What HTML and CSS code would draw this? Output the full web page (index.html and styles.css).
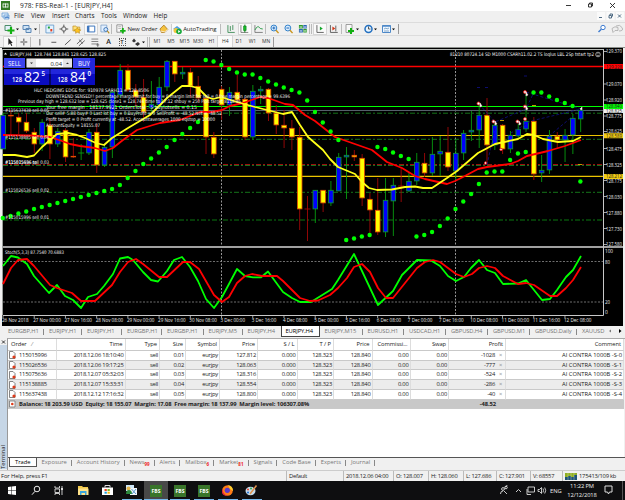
FILE: index.html
```html
<!DOCTYPE html>
<html lang="en">
<head>
  <meta charset="UTF-8">
  <title>978: FBS-Real-1 - [EURJPY,H4]</title>
  <link rel="stylesheet" href="styles.css">
</head>
<body>
  <header class="titlebar">
    <svg class="app-icon" width="9" height="9" viewBox="0 0 9 9"><path fill="#347a24" d="M0 0h9v9H0z"/><path stroke="#fff" fill="none" d="M2 2.5v4M4.5 2.5v4M7 2.5v4M2 3h5M2 6h5" stroke-width=".8"/></svg>
    <span class="title">978: FBS-Real-1 - [EURJPY,H4]</span>
    <svg class="win-buttons" width="52" height="10" viewBox="0 0 52 10"><path d="M1 5.5h5M23.5 4h3v3h-3zM24.5 4V3h3v3h-1M45 3l5 5M50 3l-5 5" fill="none" stroke="#222" stroke-width=".9"/></svg>
  </header>

  <nav class="menubar">
    <svg width="14" height="11" viewBox="0 0 14 11"><path d="M2 2h6v4H2zM4 4h5v4H4z" fill="#dcebfa" stroke="#6b9fd4" stroke-width=".8"/><path d="M5 7l2-1 2 1" stroke="#3b76c4" fill="none"/></svg>
    <span>File</span><span>View</span><span>Insert</span><span>Charts</span><span>Tools</span><span>Window</span><span>Help</span>
    <svg class="mdi-buttons" width="27" height="11" viewBox="0 0 27 11"><path d="M0 1h8v8H0zM9.500 1h8v8h-8zM19 1h8v8h-8z" fill="#fafafa"/><path d="M2 6.500h3M12 4.500h2.500v2.500H12zM13 4V3h2.500v2.500M21 3.500l3 3M24 3.500l-3 3" fill="none" stroke="#3f5d78" stroke-width=".9"/></svg>
  </nav>

  <div class="toolbar">
    <svg class="w18" viewBox="0 0 18 12"><path d="M2 2.500h6v5H2z" fill="#e4f0fb" stroke="#4b8c68"/><path d="M8 4v7M4.500 7.500h7" stroke="#12b012" stroke-width="2.200"/><path d="M13 5.500h3l-1.500 1.700z"/></svg>
    <svg class="w18" viewBox="0 0 18 12"><path d="M2 2.500h6v4H2zM5 5.500h5v4H5z" fill="#cfe3f5" stroke="#5b87b5"/><path d="M13 5.500h3l-1.500 1.700z"/></svg>
    <b class="sep"></b>
    <svg class="w14" viewBox="0 0 14 12"><path d="M3 2h8v8H3z" fill="#e3f2ff" stroke="#5b93c7" stroke-width=".8"/><path d="M5 3.500h2v2H5z" fill="#1aa030"/><path d="M7.500 6h2v2.500h-2z" fill="#e04020"/></svg>
    <svg class="w14" viewBox="0 0 14 12"><circle cx="7" cy="6" r="2.300" fill="none" stroke="#666"/><path d="M7 1.500v3M7 7.500v3M2.500 6h3M8.500 6h3" stroke="#555"/></svg>
    <svg class="w14" viewBox="0 0 14 12"><path d="M3 3h3l1 1h3v4H3z" fill="#ffe17a" stroke="#bd8c20" stroke-width=".7"/><path d="M7.500 4.500l1.200 2 2.300.4-1.500 1.500.3 2-2.200-1-2 1 .3-2L4 7l2.300-.5z" fill="#ffc21f" stroke="#a97a10" stroke-width=".5"/></svg>
    <svg class="w14 pressed" viewBox="0 0 14 12"><path d="M3.500 3h7.500v6H3.500z" fill="#fff" stroke="#3a74bd"/><path d="M3.500 3h2v6h-2z" fill="#3a74bd"/></svg>
    <svg class="w14" viewBox="0 0 14 12"><path d="M3 2h6v7H3z" fill="#e3f0ff" stroke="#7da0c8" stroke-width=".8"/><circle cx="8" cy="6.500" r="2" fill="#d5e9ff" stroke="#4177b5"/><path d="M9.500 8l2 2.500" stroke="#b88c20" stroke-width="1.200"/></svg>
    <b class="sep"></b>
    <svg class="w13" viewBox="0 0 13 12"><path d="M2 1.500h6v8H2z" fill="#fafafa" stroke="#777" stroke-width=".8"/><path d="M3.500 3.500h3M3.500 5.500h3" stroke="#999" stroke-width=".7"/><path d="M8.500 5v6M5.500 8h6" stroke="#12b012" stroke-width="2"/></svg>
    <span class="label order-label">New Order</span>
    <svg class="w14" viewBox="0 0 14 12"><path d="M3 6l4-4 4 4.500L8 9.500H4.500z" fill="#f5c23f" stroke="#a87418" stroke-width=".8"/><path d="M3.500 8l4.500 1 3-2.500" stroke="#fff" fill="none" stroke-width=".7"/></svg>
    <span class="auto">
      <svg width="11" height="11" viewBox="0 0 11 11"><path d="M1 5l4-3 4 3-4 1.500z" fill="#4d9ee0"/><circle cx="4" cy="6.500" r="2.500" fill="#f0c63d"/><circle cx="7" cy="7.500" r="2.800" fill="#17a83b"/><path d="M6.200 6l2.200 1.500-2.200 1.500z" fill="#fff"/></svg>
      <span class="label">AutoTrading</span>
    </span>
    <b class="sep"></b>
    <svg class="w14" viewBox="0 0 14 12"><path d="M4 2v7.500h7M6.500 3v5M9 2v5" fill="none" stroke="#3b8c55" stroke-width=".9"/></svg>
    <svg class="w14 pressed" viewBox="0 0 14 12"><path d="M3 2v7.500h7.500" fill="none" stroke="#666" stroke-width=".8"/><path d="M7 1.500v8" stroke="#057b15"/><path d="M5.700 3h2.600v4.500H5.700z" fill="#19be2a" stroke="#057b15" stroke-width=".6"/></svg>
    <svg class="w14" viewBox="0 0 14 12"><path d="M3 2v7.500h8" fill="none" stroke="#666" stroke-width=".8"/><path d="M3 7q3-5 4-3t4 2" fill="none" stroke="#2d9d4b"/></svg>
    <b class="sep narrow"></b>
    <svg class="w14" viewBox="0 0 14 12"><circle cx="6" cy="5" r="3" fill="#d9edff" stroke="#2f7fc9"/><path d="M4.500 5h3M6 3.500v3" stroke="#2066b5"/><path d="M8.200 7.200l2.600 3" stroke="#c9961f" stroke-width="1.500"/></svg>
    <svg class="w14" viewBox="0 0 14 12"><circle cx="6" cy="5" r="3" fill="#d9edff" stroke="#2f7fc9"/><path d="M4.500 5h3" stroke="#2066b5"/><path d="M8.200 7.200l2.600 3" stroke="#c9961f" stroke-width="1.500"/></svg>
    <svg class="w14" viewBox="0 0 14 12"><path d="M3 2h4v3.500H3zM7.500 6H11v3.500H7.500z" fill="#2d9b2d"/><path d="M7.500 2H11v3.500H7.500zM3 6h4v3.500H3z" fill="#2864b4"/><path d="M3.700 4h2.500M8 4h2.500M3.700 8h2.500M8 8h2.500" stroke="#fff" stroke-width=".9"/></svg>
    <b class="sep narrow double"></b>
    <svg class="w14 pressed" viewBox="0 0 14 12"><path d="M4 2v7.500h7" fill="none" stroke="#555" stroke-width=".9"/><path d="M7 3.500l3 2-3 2z" fill="#14a72c"/></svg>
    <svg class="w14" viewBox="0 0 14 12"><path d="M3.500 2v7.500h7.500M9 2.500v6" fill="none" stroke="#555" stroke-width=".9"/><path d="M5.500 3.500l3 2-3 2z" fill="#d43818"/></svg>
    <b class="sep narrow"></b>
    <svg class="w18" viewBox="0 0 18 12"><path d="M2 1.500h6v8H2z" fill="#f8f8f8" stroke="#888" stroke-width=".8"/><path d="M7 5v6M4 8h6" stroke="#12b012" stroke-width="2"/><path d="M12 5.500h3l-1.500 1.700z"/></svg>
    <svg class="w18" viewBox="0 0 18 12"><circle cx="6.500" cy="6" r="3.500" fill="#e9f5ff" stroke="#2370c0" stroke-width="1.500"/><path d="M6.500 3.500V6h2" fill="none" stroke="#333" stroke-width=".8"/><path d="M12 5.500h3l-1.500 1.700z"/></svg>
    <svg class="w18" viewBox="0 0 18 12"><path d="M2.500 2.500h8v7h-8z" fill="#eef6ff" stroke="#4e89c8"/><path d="M2.500 3h8" stroke="#4e89c8" stroke-width="1.500"/><path d="M4 6l2-1 1 1 2-1M4 8h5" stroke="#3d77a8" fill="none" stroke-width=".6"/><path d="M12 5.500h3l-1.500 1.700z"/></svg>
    <b class="sep end"></b>
    <svg class="search" width="28" height="12" viewBox="0 0 28 12"><circle cx="6" cy="4.500" r="2.200" fill="#fff" stroke="#3d7bd0"/><path d="M4.300 6.300L1.500 9" stroke="#3d7bd0" stroke-width="1.400"/><path d="M15 5.500q3-3 6-1v3h-3l-2 2zM19 3q4-2 6 1.500T22 8" fill="#eee" stroke="#aaa" stroke-width=".8"/></svg>
  </div>

  <div class="toolbar tools">
    <svg class="w14 pressed" viewBox="0 0 14 12"><path d="M5.500 2v7l1.700-1.600L8.500 10l1-.5-1.200-2.500H10z" fill="#222"/></svg>
    <svg class="w14" viewBox="0 0 14 12"><path d="M7 2.500v3M7 6.500v3M3.500 6h3M7.500 6h3" stroke="#333" stroke-width=".9"/></svg>
    <b class="sep narrow"></b>
    <svg class="w14" viewBox="0 0 14 12"><path d="M7 3v6.500" stroke="#444" stroke-width=".9"/></svg>
    <svg class="w14" viewBox="0 0 14 12"><path d="M4.500 6.300h5" stroke="#444" stroke-width=".9"/></svg>
    <svg class="w14" viewBox="0 0 14 12"><path d="M4 9l6-5.500" stroke="#444" stroke-width=".9"/></svg>
    <svg class="w14" viewBox="0 0 14 12"><path d="M3 8l6-5.500M5 10l6-5.500M5 3.500l4 4" stroke="#444" stroke-width=".8"/></svg>
    <svg class="w14" viewBox="0 0 14 12"><path d="M3.500 3h7M3.500 5.500h7M3.500 8h6" stroke="#666" stroke-width=".8"/><path d="M10 7v4M8.500 9h3" stroke="#444" stroke-width=".7"/></svg>
    <span class="glyph">A</span>
    <span class="glyph boxed">T</span>
    <svg class="w18" viewBox="0 0 18 12"><path d="M3 5l2-2.500L7 5 5 6.500zM6 8l3-2 2 2-2.500 2z" fill="#333"/><path d="M13 5.500h3l-1.500 1.700z"/></svg>
    <b class="sep double"></b>
    <span class="tf">M1</span><span class="tf">M5</span><span class="tf">M15</span><span class="tf">M30</span><span class="tf">H1</span><span class="tf on">H4</span><span class="tf">D1</span><span class="tf">W1</span><span class="tf">MN</span>
    <b class="sep end"></b>
  </div>

  <main class="chart-window">
    <svg class="chart" width="625" height="279" viewBox="0 47 625 279">
      <path fill="#000" d="M2 48h621v278H2z"/>
      <path d="M0 47.500h625" stroke="#8b8f8b"/>
      <path d="M2.500 49.500h601" stroke="#b9bdb9"/>
      <path d="M2.500 49v266" stroke="#9a9d9a"/>
      <!-- day separators and horizontal levels -->
      <path class="separator" d="M221.500 50v265M455.500 50v265"/>
      <path d="M3 113.200h600M3 139.300h600M3 192.300h600" stroke="#16801c" stroke-width=".9" stroke-dasharray="5 2 2 2"/>
      <path d="M3 220h600" stroke="#07500b" stroke-width="1.400" stroke-dasharray="5 2 2 2"/>
      <path d="M3 164.500h600" stroke="#b01010" stroke-dasharray="5 2 2 2" stroke-width=".9"/>
      <path d="M3 165.500h600" stroke="#188020" stroke-dasharray="5 2 2 2" stroke-width=".9"/>
      <path d="M3 110.500h600" stroke="#55606a"/>
      <path d="M3 66.500h600" stroke="#f00" stroke-width="1.400"/>
      <path d="M3 106.500h600" stroke="#0f0" stroke-width="1.200"/>
      <path d="M3 135.500h600M3 176.400h600" stroke="#ecc400" stroke-width="1.200"/>
      <g id="candles"></g>
      <path d="M526 92l55 17-50 12-20 12M479 104l16 18 31-13 8-17M487 165l8-37M549 136l24-20M477 87.500h4M485 87.500h4M524 76h4" fill="none" stroke="#10108c" stroke-width=".8" stroke-dasharray="3 2"/>
      <polyline class="ma slow" points="3,135 30,135.500 50,137 62,141 70,144 80,146 95,148 105,151 113,148 123,140 137,130 153,125 160,123 180,120 200,112 212,112 222,110 230,106 243,103 260,97 268,98 285,104 293,105 305,115 315,121 325,129 335,137 352,143 372,150 387,162 402,168 415,176 425,179 447,184 455,181 463,177 478,169 487,167 510,164 518,161 527,156 548,151 565,146 581,140"/>
      <polyline class="ma fast" points="3,155 15,155 27,157 34,155.500 42,147 57,134 68,133 77,135 85,138 96,143 104,145 112,138 120,133 128,128 150,115 167,98 182,86 190,86 198,88 207,97 213,99 221,97 237,102 255,107 283,114 292,112 300,125 308,137 323,150 330,159 338,167 355,174 362,182 369,188 377,190 392,189.500 405,187 415,186.500 423,188 432,188 447,178 457,171 478,153 495,144 518,139 527,134 534,135 543,139 558,142 573,141 581,137"/>
      <g id="sar"></g>
      <g fill="#fff" stroke="#e01818" stroke-width=".9">
        <circle cx="478.500" cy="103.500" r="1.500"/><circle cx="493.500" cy="121.500" r="1.500"/><circle cx="517.500" cy="121.500" r="1.500"/><circle cx="525" cy="92" r="1.500"/><circle cx="525" cy="106.500" r="1.500"/><circle cx="525" cy="119" r="1.500"/><circle cx="485.500" cy="163" r="1.200"/><circle cx="501" cy="149.500" r="1.200"/>
      </g>
      <path d="M480 103l2 3-2 1zM495 121l2 3-2 1zM519 121l2 3-2 1zM526 92l2 3-2 1zM526 106l2 3-2 1zM580 109l2-2v3z" fill="#fff" stroke="#ecc" stroke-width=".6"/>
      <path d="M532 105.500h4M500 120.500h4M578 164.500h4" stroke="#d0b000" stroke-width=".9"/>

      <!-- comment block of the expert -->
      <g class="chart-text">
        <path d="M4 54.500h3l-1.500-2z" fill="#fff"/>
        <text x="10" y="55.500" textLength="96">EURJPY,H4&#160; 128.744 128.841 128.625 128.825</text>
        <text x="450" y="56" textLength="144">81210 80724.14 SD M1000 CSARh11.02.2 TS loqlus LBL 2Sp tstart tp2</text>
        <circle cx="598" cy="54.500" r="2.300" fill="none" stroke="#ddd" stroke-width=".7"/><path d="M596.800 55q1.200 1.400 2.400 0M597 53.600h.6M598.500 53.600h.6" fill="none" stroke="#ddd" stroke-width=".6"/>
        <text x="34" y="91.500" textLength="115">HLC HEDGING EDGE for: 910978 SARH11 = 128.8506</text>
        <text x="46" y="97.500" textLength="244">DOWNTREND SENSED!! percentage margin limit for buy = 0 margin limit for sell = 0 free margin percentage = 99.6396</text>
        <text x="18" y="103" textLength="223">Previous day high = 128.632 low = 128.625 close1 = 128.744 time to 17:12 shbuy = 250 Pips target 8118.96</text>
        <text x="46" y="109.200" textLength="151">Your free margin : 18137.9921 OrdersTotal : 5 buylotsells = 0.15</text>
        <text x="46" y="115" textLength="176">Our sell# 5.88 buy# 0 Last lot buy = 0.BuyProfit = 0 SellProfit = -48.52 Net = -48.52</text>
        <text x="46" y="120.700" textLength="169">Profit target = 0 Profit currently at -48.52. Accountaverages 1000 eqstop = 10000</text>
        <text x="46" y="126.500" textLength="54">AccountEquity = 18155.07</text>
        <text x="5" y="112.300" textLength="44">#115637438 sell 0.05</text>
        <text x="5" y="138.500" textLength="44">#115138885 sell 0.04</text>
        <text x="5" y="164" textLength="44">#115075636 sell 0.03</text>
        <text x="5" y="164" textLength="32">#115015996 tp</text>
        <text x="5" y="191.800" textLength="44">#115026536 sell 0.02</text>
        <text x="5" y="219" textLength="44">#115015996 sell 0.01</text>
      </g>

      <!-- one click trading panel -->
      <path d="M4 58h91v28H4z" fill="#000"/>
      <path d="M4 58h21v10H4zM73 58h17v10H73z" fill="#3a42ed"/>
      <path d="M4 69h45.500v16H4zM50.500 69H95v16H50.500z" fill="#0a0cc0"/>
      <path d="M4 69h45.500v5H4zM50.500 69H95v5H50.500zM90 58h5v11h-5z" fill="#2226db"/>
      <path d="M26.500 58.500H72v9H26.500z" fill="#fff"/><path d="M27 59h9v8h-9zM63 59h9v8h-9z" fill="#e4e4e4"/>
      <path d="M30 62.500h3l-1.500 1.600zM66 64h3l-1.500-1.600z" fill="#333"/>
      <g class="trade-text">
        <text x="8" y="65.800" textLength="13" class="side">SELL</text>
        <text x="78" y="65.800" textLength="12" class="side">BUY</text>
        <text x="50.500" y="65.500" textLength="11.500" class="lots">0.04</text>
        <text x="12" y="82" textLength="10" class="small">128</text><text x="24" y="82" textLength="16" class="big">82</text><text x="41.500" y="75.500" class="small">5</text>
        <text x="57.500" y="82" textLength="10" class="small">128</text><text x="70" y="82" textLength="16" class="big">84</text><text x="87.500" y="75.500" class="small">0</text>
      </g>

      <!-- stochastic -->
      <path d="M3 247h620" stroke="#a0a0a0" stroke-width="2"/>
      <path class="level" d="M3 261.500h600M3 302h600"/>
      <text class="chart-text" x="5" y="253.500" textLength="59">Stoch(5,3,3) 87.7540 70.6883</text>
      <polyline class="stoch main" points="3,266 11,256 18,257.500 27,264 34,276 49,293 57,285 65,296 73,300 81,308 88,297 97,294 104,286 113,274 120,258.500 128,257 133,260 143,272 151,280 158,281.500 167,271 174,260 182,257 190,267 198,281 206,299 214,308 222,297 229,284 237,269 245,276 253,277.300 261,277.300 268,271.500 283,292 292,298 300,302 311,302 332,289 338,280 354,254 378,305 393,291 402,275 417,260 431,260.500 440,266 448,276 456,281 464,277 471,268 479,260 487,270 495,273 503,284 518,283.500 526,280 542,300 550,299 557,290 566,277 573,270 581,256"/>
      <polyline class="stoch signal" points="3,284 11,268 18,260 27,259 34,266 50,285 57,288 72,293 81,301 95,301 112,285 120,272 128,262 136,259 143,264 159,277 167,277 183,262 190,262 199,269 214,295 222,302 229,297 237,283 245,276 252,274 262,276 277,276 283,281 300,298 310,301 318,300.500 330,295 338,288 347,278 354,267 362,264 370,272 378,288 386,298 393,298 417,268 425,262 433,260 440,262 456,274 464,277 472,274 479,268 487,266 495,268 503,276 518,284 526,283 534,285 550,296 557,296 566,288 573,280 581,267"/>

      <!-- scales -->
      <path d="M603.500 49v266.500H3" fill="none" stroke="#c8c8c8"/>
      <path d="M604 51.500h3M604 84h3M604 100h3M604 116h3M604 131.500h3M604 148.500h3M604 164.500h3M604 180.500h3M604 196.500h3M604 212.500h3M604 228.500h3M604 244.500h3" stroke="#ccc" stroke-width=".8"/>
      <g class="axis-text" id="prices"></g>
      <path d="M604 64h19v5h-19z" fill="#f00"/><path d="M604 108h19v5h-19z" fill="#eee"/><path d="M604 104h19v5h-19z" fill="#0f0"/><path d="M604 133.300h19v5h-19zM604 174h19v5h-19z" fill="#f2cb12"/>
      <g class="axis-text dark">
        <text x="606" y="68.500" textLength="16">129.228</text><text x="606" y="112.900" textLength="16">128.825</text><text x="606" y="108.300" textLength="16">128.840</text><text x="606" y="137.700" textLength="16">128.589</text><text x="606" y="178.300" textLength="16">128.212</text>
      </g>
      <g class="axis-text">
        <text x="605" y="253.300" textLength="8">100</text><text x="605" y="263.500" textLength="5">80</text><text x="605" y="304" textLength="5">20</text><text x="605" y="314.300">0</text>
      </g>
      <g class="axis-text" id="dates"></g>
    </svg>
  </main>

  <div class="chart-tabs">
    <span>EURGBP,H1</span><span>EURJPY,H1</span><span>EURJPY,H1</span><span>EURGBP,H1</span><span>EURGBP,H1</span><span>EURJPY,M5</span><span class="no-line">EURJPY,H4</span><span class="on">EURJPY,H4</span><span>EURJPY,M15</span><span>EURUSD,H1</span><span>USDCAD,H1</span><span>GBPUSD,H4</span><span>GBPUSD,M1</span><span>GBPUSD,Daily</span><span class="no-line">XAUUSD</span>
    <svg width="16" height="10" viewBox="0 0 16 10"><path d="M4 3.500v3L2 5z" fill="#777"/><path d="M12 3v4l2.500-2z"/></svg>
  </div>

  <section class="terminal">
    <aside class="side-strip">
      <svg width="7" height="6" viewBox="0 0 7 6"><path d="M2 1.500l3 3M5 1.500l-3 3" stroke="#222" stroke-width=".9"/></svg>
      <div class="strip-label"><span>Terminal</span></div>
    </aside>
    <div class="panel">
      <table class="orders">
        <colgroup><col class="c-order"><col class="c-time"><col class="c-type"><col class="c-size"><col class="c-symbol"><col class="c-price"><col class="c-sl"><col class="c-tp"><col class="c-cur"><col class="c-comm"><col class="c-swap"><col class="c-profit"><col class="c-comment"></colgroup>
        <tr class="head"><th class="first">Order &#160; <i>/</i></th><th>Time</th><th>Type</th><th>Size</th><th>Symbol</th><th>Price</th><th>S / L</th><th>T / P</th><th>Price</th><th>Commissi...</th><th>Swap</th><th>Profit</th><th>Comment</th></tr>
        <tr><td class="first"><svg class="doc" viewBox="0 0 7 8"><path d="M.500.500H4l2 2v5H.500z" fill="#fff" stroke="#666" stroke-width=".8"/><circle cx="5" cy="6" r="1.600" fill="#e03a18"/></svg>115015996</td><td>2018.12.06 18:10:40</td><td>sell</td><td>0.01</td><td>eurjpy</td><td>127.812</td><td>0.000</td><td>128.323</td><td>128.840</td><td>0.00</td><td>0.00</td><td class="profit">-1028<i>×</i></td><td class="comment">AI CONTRA 1000B -S-0</td></tr>
        <tr class="alt"><td class="first"><svg class="doc" viewBox="0 0 7 8"><path d="M.500.500H4l2 2v5H.500z" fill="#fff" stroke="#666" stroke-width=".8"/><circle cx="5" cy="6" r="1.600" fill="#e03a18"/></svg>115026536</td><td>2018.12.06 19:17:25</td><td>sell</td><td>0.02</td><td>eurjpy</td><td>128.063</td><td>0.000</td><td>128.323</td><td>128.840</td><td>0.00</td><td>0.00</td><td class="profit">-777<i>×</i></td><td class="comment">AI CONTRA 1000B -S-1</td></tr>
        <tr><td class="first"><svg class="doc" viewBox="0 0 7 8"><path d="M.500.500H4l2 2v5H.500z" fill="#fff" stroke="#666" stroke-width=".8"/><circle cx="5" cy="6" r="1.600" fill="#e03a18"/></svg>115075636</td><td>2018.12.07 05:32:03</td><td>sell</td><td>0.03</td><td>eurjpy</td><td>128.316</td><td>0.000</td><td>128.323</td><td>128.840</td><td>0.00</td><td>0.00</td><td class="profit">-524<i>×</i></td><td class="comment">AI CONTRA 1000B -S-2</td></tr>
        <tr class="alt"><td class="first"><svg class="doc" viewBox="0 0 7 8"><path d="M.500.500H4l2 2v5H.500z" fill="#fff" stroke="#666" stroke-width=".8"/><circle cx="5" cy="6" r="1.600" fill="#e03a18"/></svg>115138885</td><td>2018.12.07 15:33:31</td><td>sell</td><td>0.04</td><td>eurjpy</td><td>128.554</td><td>0.000</td><td>128.323</td><td>128.840</td><td>0.00</td><td>0.00</td><td class="profit">-286<i>×</i></td><td class="comment">AI CONTRA 1000B -S-3</td></tr>
        <tr><td class="first"><svg class="doc" viewBox="0 0 7 8"><path d="M.500.500H4l2 2v5H.500z" fill="#fff" stroke="#666" stroke-width=".8"/><circle cx="5" cy="6" r="1.600" fill="#e03a18"/></svg>115637438</td><td>2018.12.12 17:16:32</td><td>sell</td><td>0.05</td><td>eurjpy</td><td>128.800</td><td>0.000</td><td>128.323</td><td>128.840</td><td>0.00</td><td>0.00</td><td class="profit">-40<i>×</i></td><td class="comment">AI CONTRA 1000B -S-4</td></tr>
        <tr class="balance"><td colspan="11" class="first"><svg class="doc" viewBox="0 0 7 8"><path d="M.500 1h5.500v6H.500z" fill="#fff" stroke="#777" stroke-width=".8"/><circle cx="3.300" cy="4" r="1.300" fill="#e03a18"/></svg>Balance: 18 203.59 USD&#160; Equity: 18 155.07&#160; Margin: 17.08&#160; Free margin: 18 137.99&#160; Margin level: 106307.08%</td><td class="profit">-48.52</td><td></td></tr>
      </table>
      <div class="bottom-tabs">
        <span class="on">Trade</span><span>Exposure</span><span>Account History</span><span>News<sub>99</sub></span><span>Alerts</span><span>Mailbox<sub>6</sub></span><span>Market<sub>81</sub></span><span>Signals</span><span>Code Base</span><span>Experts</span><span>Journal</span>
      </div>
    </div>
  </section>

  <footer class="status">
    <span class="help">For Help, press F1</span><span>Default</span><span>2018.12.06 04:00</span><span>O: 128.007</span><span>H: 128.060</span><span>L: 127.686</span><span>C: 127.901</span><span>V: 68557</span>
    <span class="net"><svg width="12" height="7" viewBox="0 0 12 7"><path fill="#8fae24" d="M0 0h12v4H0z"/><path fill="#1d5278" d="M0 4h3v3H0zM3 3h3v4H3zM6 4h3v3H6zM9 2h3v5H9z"/><path stroke="#dfe7c0" stroke-width=".4" d="M3 0v7M6 0v7M9 0v7"/></svg>175413/109 kb</span>
  </footer>

  <div class="taskbar">
    <span class="app"><svg viewBox="0 0 24 19"><path d="M8 6l3.300-.500v3.700H8zM11.800 5.400L16 5v4.200h-4.200zM8 9.700h3.300v3.700L8 13zM11.800 9.700H16V14l-4.200-.500z" fill="#fff"/></svg></span>
    <span class="app"><svg viewBox="0 0 24 19"><circle cx="13" cy="8" r="2.800" fill="none" stroke="#eee"/><path d="M11 10.300L8 13.700" stroke="#eee"/></svg></span>
    <span class="app"><svg viewBox="0 0 24 19"><path d="M7 5v2h4.500V5M7 8h4.500v3.500H7zM7 14v-1.500h4.500V14M14 5v9" fill="none" stroke="#ddd" stroke-width=".9"/><path d="M13 7h2v2h-2z" fill="#ddd"/></svg></span>
    <span class="app"><svg viewBox="0 0 24 19"><path d="M6 5h4l1 1h5v8H6z" fill="#f2c94c"/><path d="M6 7.500h10.500V14H6z" fill="#ffe28a"/><path d="M8 10h6.500v4H13v-2h-3.500v2H8z" fill="#3ba4dc"/></svg></span>
    <span class="app"><svg viewBox="0 0 24 19"><path d="M6 6.500h11V14H6z" fill="#fff"/><path d="M9 6.500V4.500h5v2" fill="none" stroke="#ddd"/><path d="M8.500 8h2.300v2H8.500z" fill="#e9421e"/><path d="M11.500 8h2.300v2h-2.300z" fill="#78b928"/><path d="M8.500 10.700h2.300v2H8.500z" fill="#19a0dc"/><path d="M11.500 10.700h2.300v2h-2.300z" fill="#f5b80f"/></svg></span>
    <span class="app open"><svg viewBox="0 0 24 19"><path d="M6 4h8v6H6z" fill="#cfe8fa"/><path d="M10 7h7v7h-7z" fill="#f2f7fa"/><circle cx="8.500" cy="7.500" r="2" fill="#e2b44a"/><path d="M6 13q0-4 3-4t3 4z" fill="#2b8a3d"/><path d="M11.500 8l4.500 5M12 13l4-5" stroke="#5799d2"/></svg></span>
    <span class="app open active"><b class="fbs">FBS</b></span>
    <span class="app open"><b class="fbs">FBS</b></span>
    <span class="app open"><b class="fbs">FBS</b></span>
    <span class="app open"><svg viewBox="0 0 24 19"><circle cx="11.500" cy="9.500" r="5.300" fill="#ff7b16"/><path d="M12 4q5 1 5 6l-3-2z" fill="#ffcf2e"/><path d="M6.500 7q0 7 5 7.500-6 1-5.500-5z" fill="#e6233c"/><circle cx="11.300" cy="9.300" r="2.600" fill="#5a3bc8"/></svg></span>
    <span class="app open"><svg viewBox="0 0 24 19"><ellipse cx="10.500" cy="10" rx="5" ry="4.200" fill="#c5dcec"/><circle cx="8" cy="8.500" r="1.100" fill="#e64b35"/><circle cx="11" cy="7.500" r="1.100" fill="#3aa757"/><circle cx="8" cy="11.500" r="1.100" fill="#2c77d1"/><path d="M10 13l6.500-8.500" stroke="#e0914a" stroke-width="1.500"/></svg></span>
    <div class="tray">
      <svg width="52" height="19" viewBox="0 0 52 19"><g fill="none" stroke="#ddd" stroke-width=".9"><circle cx="5" cy="8" r="1.400"/><path d="M2.500 13q0-3 2.500-3M7 6q2 0 2-2M6 10l3 3"/><circle cx="8" cy="6.500" r="1.300"/><path d="M18 11l2.500-2.500L23 11M30 6h6.500v5H30zM29 8v5.500h4M40 8.500h1.500l2-2v6l-2-2H40zM45 7.500q1 2 0 4M46.700 6.500q2 3 0 6"/></g></svg>
      <span class="lang">ENG</span>
      <span class="clock">11:22 PM<br>12/12/2018</span>
      <svg width="22" height="19" viewBox="0 0 22 19"><path d="M5 5h7v6H9.500L8.500 13 7.500 11H5z" fill="none" stroke="#ddd"/></svg>
    </div>
  </div>
  <script src="chart.js"></script>
</body>
</html>
```
FILE: styles.css
```css
* {
  box-sizing: border-box;
}
body {
  margin: 0;
  width: 625px;
  height: 500px;
  overflow: hidden;
  display: flex;
  flex-direction: column;
  background: #f0f0f0;
  color: #222;
  font-family: "Open Sans", "Noto Sans", sans-serif;
  font-size: 5.8px;
  line-height: 8px;
  white-space: nowrap;
}
svg {
  display: block;
  flex: none;
}

/* window frame */
.titlebar {
  display: flex;
  height: 11px;
  background: #fff;
  flex: none;
}
.app-icon {
  margin: 1px 10px 0 1px;
}
.title {
  line-height: 11px;
  font-size: 6.6px;
  letter-spacing: .12px;
}
.win-buttons {
  margin-left: auto;
  margin-right: 8px;
}
.menubar {
  display: grid;
  grid-template-columns: 14px 17px 21px 23px 26px 22px 30.5px 20px 1fr;
  height: 11px;
  line-height: 10px;
  font-size: 6.4px;
  flex: none;
}
.mdi-buttons {
  justify-self: end;
  margin-right: 1px;
}

/* toolbars */
.toolbar {
  display: flex;
  align-items: center;
  height: 13px;
  flex: none;
  border-top: 1px solid #dcdcdc;
  padding-left: 3px;
}
.tools {
  height: 12px;
}
.w13 {
  width: 12px;
  height: 12px;
}
.w14 {
  width: 13.7px;
  height: 12px;
}
.w18 {
  width: 18px;
  height: 12px;
}
.pressed {
  background: #fafafa;
  outline: 1px solid #d5d5d5;
  outline-offset: -1px;
}
.sep {
  width: 3px;
  height: 10px;
  border-left: 1px solid #bbb;
  margin-right: 1px;
  flex: none;
}
.narrow {
  width: 2px;
}
.double {
  border-right: 1px solid #bbb;
  width: 3px;
}
.end {
  border-color: #999;
}
.label {
  display: inline-block;
  font-size: 6px;
  letter-spacing: -.1px;
  line-height: 11px;
}
.order-label {
  width: 30px;
}
.auto {
  display: flex;
  width: 49px;
  height: 11px;
  background: #fafafa;
  border-left: 1px solid #ccc;
}
.search {
  margin-left: auto;
}
.glyph {
  width: 13.7px;
  text-align: center;
  font-size: 7px;
  font-weight: 600;
}
.boxed {
  width: 7px;
  height: 8px;
  line-height: 6px;
  font-size: 6px;
  border: 1px dotted #555;
  margin: 0 3px;
}
.tf {
  width: 13.6px;
  text-align: center;
  font-size: 5px;
  line-height: 11px;
  color: #333;
}
.tf.on {
  background: #fbfbfb;
  outline: 1px solid #d5d5d5;
}

/* chart */
.chart-window {
  height: 279px;
  flex: none;
}
.separator {
  stroke: #bbb;
  stroke-width: .8;
  stroke-dasharray: 2 1.5;
}
.level {
  stroke: #8a8a8a;
  stroke-width: .8;
  stroke-dasharray: 2 1.5;
}
.ma,
.stoch {
  fill: none;
  stroke-width: 1.8;
  stroke-linejoin: round;
}
.fast {
  stroke: #ffff18;
}
.slow,
.signal {
  stroke: #f00;
}
.main {
  stroke: #0f0;
}
.bull {
  fill: #00f;
  stroke: #0d9a35;
  stroke-width: .8;
}
.bear {
  fill: #ff0;
  stroke: #e64a00;
  stroke-width: .8;
}
.wick-bull {
  stroke: #079c10;
  stroke-width: .9;
}
.wick-bear {
  stroke: #a30808;
  stroke-width: .9;
}
#sar {
  fill: #0f0;
}
.chart-text {
  font-family: "DejaVu Sans", sans-serif;
  font-size: 4.9px;
  fill: #f4f4f4;
}
.axis-text {
  font-size: 4.9px;
  fill: #eee;
}
.dark {
  fill: #222;
}
.trade-text {
  fill: #fff;
}
.side {
  font-size: 6.5px;
}
.lots {
  font-size: 6px;
  fill: #222;
}
.small {
  font-size: 6.2px;
  font-weight: 600;
}
.big {
  font-size: 14px;
}

/* chart tabs */
.chart-tabs {
  display: grid;
  grid-template-columns: 41px 38px 40px 40px 41.5px 39px 38px 39px 43px 41.5px 42px 42px 42px 47px 30px 18px;
  height: 11px;
  padding-left: 3px;
  flex: none;
  color: #777;
  line-height: 10px;
  letter-spacing: -.1px;
}
.chart-tabs span {
  padding-left: 5px;
  background: linear-gradient(#888, #888) right 3px / 1px 6px no-repeat;
}
.chart-tabs .no-line {
  background: none;
}
.chart-tabs .on {
  background: #fff;
  color: #000;
  border: 1px solid #444;
  border-top: 0;
  padding-left: 4px;
}

/* terminal */
.terminal {
  display: flex;
  height: 133px;
  flex: none;
  padding-top: 1px;
}
.side-strip {
  width: 7px;
  padding-top: 1px;
}
.strip-label {
  height: 124px;
  background: #c6d6e6;
  display: flex;
  align-items: flex-end;
}
.strip-label span {
  writing-mode: vertical-rl;
  transform: rotate(180deg);
  line-height: 7px;
}
.panel {
  flex: 1;
  display: flex;
  flex-direction: column;
  justify-content: space-between;
  background: linear-gradient(#fff, #fff) no-repeat 0 0 / 616px 118px;
  border-left: 1px solid #999;
  border-top: 1px solid #aaa;
}
.orders {
  border-collapse: separate;
  border-spacing: 0;
  table-layout: fixed;
  width: 616px;
}
.c-order { width: 49px; }
.c-time { width: 68.5px; }
.c-type { width: 34.5px; }
.c-size { width: 26px; }
.c-symbol { width: 34px; }
.c-price { width: 38px; }
.c-sl { width: 39.5px; }
.c-tp { width: 36.5px; }
.c-cur { width: 38.5px; }
.c-comm { width: 38px; }
.c-swap { width: 38.5px; }
.c-profit { width: 57px; }
.c-comment { width: 118px; }
.orders th,
.orders td {
  padding: 0 1px 0 0;
  height: 9.7px;
  line-height: 8.7px;
  text-align: right;
  font-weight: normal;
  letter-spacing: -.22px;
  border-right: 1px solid #ddd;
  border-bottom: 1px solid #c9c9c9;
}
.orders th {
  height: 12px;
  padding-right: 2px;
  letter-spacing: -.08px;
}
.orders .first {
  text-align: left;
  padding-left: 3px;
}
.orders td.first {
  padding-left: 1px;
}
.orders .comment {
  letter-spacing: 0;
}
.orders i {
  color: #888;
}
.alt {
  background: #ececec;
}
.doc {
  display: inline-block;
  width: 7px;
  height: 8px;
  margin-right: 3px;
  vertical-align: middle;
}
.orders .profit {
  padding-right: 10px;
}
.profit i {
  display: inline-block;
  width: 11px;
  margin-right: -11px;
  text-align: center;
  font-style: normal;
}
.balance {
  background: #c8c8c8;
}
.orders .balance td {
  font-weight: bold;
  border-right: 0;
  letter-spacing: -.1px;
}
.bottom-tabs {
  display: flex;
  height: 13px;
  border-top: 1px solid #555;
  color: #777;
  line-height: 9px;
}
.bottom-tabs span {
  height: 10px;
  padding: 0 5px;
  background: linear-gradient(#888, #888) right 2px / 1px 6px no-repeat;
}
.bottom-tabs .on {
  color: #000;
  background: #fff;
  border: 1px solid #555;
  border-top: 0;
  margin-left: 1px;
  height: 9px;
}
.bottom-tabs sub {
  color: #e22;
  font-size: 4.5px;
  font-weight: bold;
  line-height: 0;
}

/* status bar */
.status {
  display: grid;
  grid-template-columns: 285px 57px 50px 35px 35px 33px 34px 32px 1fr;
  height: 11px;
  flex: none;
  border-top: 1px solid #ccc;
  line-height: 10px;
  padding-left: 1px;
  letter-spacing: -.22px;
}
.status .help {
  letter-spacing: -.1px;
}
.status span + span {
  border-left: 1px solid #bbb;
  padding-left: 2px;
}
.status .net {
  display: flex;
  align-items: center;
  gap: 2px;
}

/* taskbar */
.taskbar {
  display: flex;
  flex: 1;
  background: #0e0e10;
}
.app {
  width: 24px;
  display: flex;
  align-items: center;
  justify-content: center;
}
.app svg {
  width: 24px;
  height: 19px;
}
.open {
  background: linear-gradient(#76b9ed, #76b9ed) center bottom / 20px 1px no-repeat;
}
.active {
  background-color: #484848;
  background-size: 24px 1px;
}
.fbs {
  width: 12px;
  height: 12px;
  background: #39752a;
  color: #fff;
  font-size: 5px;
  line-height: 12px;
  text-align: center;
}
.tray {
  display: flex;
  align-items: center;
  margin-left: auto;
  margin-right: 2px;
  color: #eee;
  border-right: 1px solid #555;
}
.lang {
  width: 14px;
}
.clock {
  width: 36px;
  text-align: center;
  line-height: 9px;
  letter-spacing: -.15px;
}
```
FILE: chart.js
```js
const NS = 'http://www.w3.org/2000/svg';
const START = 3.1;
const STEP = 7.805;

function add(parent, tag, attrs, text) {
  const el = document.createElementNS(NS, tag);
  for (const key in attrs) el.setAttribute(key, attrs[key]);
  if (text) el.textContent = text;
  document.getElementById(parent).appendChild(el);
}

// [direction, body top, body bottom, wick top, wick bottom]
const candles = [
  [1,115,149,113,149],[0,115,116,110,135],[0,117,122,113,134],[0,122,131,113,133],[0,132,144,128,153],
  [1,122,144,119,151],[0,125,144,118,159],[1,131,144,128,147],[0,130,157,128,162],[0,156,157,138,158],
  [1,153,153.5,144,160],[1,132,153,129,155],[0,132,165,124,173],[1,147,165,145,167],[1,92,147,90,158],
  [1,70,95,64,98],[0,70,90,64,92],[0,90,97,84,107],[0,97,112,79,122],[1,104,108,81,112],
  [1,87,105,77,108],[1,61,87,60,91],[0,61,74,61,82],[1,72,74,67,79],[0,72,86,68,98],
  [0,86,98,76,102],[0,98,137,96,154],[0,137,154,132,158],[0,89,105,86,120],[1,92,105,87,116],
  [0,92,100,75,105],[0,99,137,98,140],[1,91,137,85,139],[1,89,91,86,104],[0,89,113,88,121],
  [0,113,125,105,134],[0,125,128,110,148],[0,128,137,120,150],[0,137,209,127,230],[0,209,209.5,196,241],
  [1,190,209,190,223],[0,190,203,190,212],[1,190,203,181,206],[1,157,191,153,191],[1,155,157,147,199],
  [0,155,157,150,161],[0,158,198,154,206],[0,199,210,193,235],[0,210,232,178,235],[1,200,232,178,237],
  [1,185,201,178,236],[0,186,186.5,168,202],[1,181,191,172,192],[1,162,181,153,185],[0,163,173,153,177],
  [1,154,173,137,176],[1,151,154,136,176],[0,152,167,127,171],[1,153,171,140,181],[1,133,153,130,160],
  [1,130,132,111,141],[1,115,130,104,148],[0,115,145,98,165],[1,125,145,122,150],[0,125,149,124,154],
  [1,135,149,131,153],[1,129,136,124,138],[1,121,129,92,132],[0,121,174,117,180],[1,170,173,155,182],
  [1,136,170,130,174],[0,136,140,132,148],[1,135,140,129,162],[1,118,135,114,154],[1,110,119,108,132]
];

candles.forEach(([up, top, bottom, high, low], i) => {
  const x = START + i * STEP;
  const kind = up ? 'bull' : 'bear';
  add('candles', 'path', { class: 'wick-' + kind, d: `M${x} ${high}V${low}` });
  if (bottom - top < 1) {
    add('candles', 'path', { class: 'wick-' + kind, d: `M${x - 3} ${top}h6` });
  } else {
    add('candles', 'rect', { class: kind, x: x - 2.3, y: top + .3, width: 4.6, height: bottom - top - .4 });
  }
});

// parabolic SAR, one value per bar
const sar = [
  218,216,213.5,211.5,209,207,205,203,201,199,197,195,193,191,189,185,178,171,164,158.5,152.5,147,140,134,128,122,
  60,61.5,65,69,72.5,74.5,74.5,78,81.5,84.5,87.5,90,92.5,100.5,112,122.5,131.5,140,
  240,238.5,236.5,235,147,149,152.5,156,159,236.5,235,232,226,218.5,209,201.5,194,184,172.5,171.5,171.5,160,153.5,152,
  92.5,92.5,96.5,100,103,106,181.5
];
sar.forEach((y, i) => add('sar', 'circle', { cx: START - .3 + i * STEP, cy: y, r: 2.2 }));

const prices = [['129.370',51],['129.070',84],['128.920',100],['128.775',116],['128.625',131],['128.475',149],['128.325',164.5],
  ['128.175',181],['128.030',196.5],['127.880',212.5],['127.730',228.5],['127.580',244]];
prices.forEach(([p, y]) => add('prices', 'text', { x: 606, y: y + 2, textLength: 16 }, p));

const dates = ['26 Nov 2018','27 Nov 00:00','27 Nov 16:00','28 Nov 08:00','29 Nov 00:00','29 Nov 16:00','30 Nov 08:00','3 Dec 00:00',
  '3 Dec 16:00','4 Dec 08:00','5 Dec 00:00','5 Dec 16:00','6 Dec 08:00','7 Dec 00:00','7 Dec 16:00','10 Dec 08:00','11 Dec 00:00',
  '11 Dec 16:00','12 Dec 08:00'];
dates.forEach((d, i) => {
  const x = 2 + i * 31.22;
  add('dates', 'path', { d: `M${x + 1} 315v3`, stroke: '#ccc', 'stroke-width': .8 });
  add('dates', 'text', { x: x, y: 322, textLength: d.length > 11 ? 27.5 : i ? 24.5 : 26.5 }, d);
});

// squeeze the glyphs along with the spacing
document.querySelectorAll('text[textLength]').forEach(t => t.setAttribute('lengthAdjust', 'spacingAndGlyphs'));
```
